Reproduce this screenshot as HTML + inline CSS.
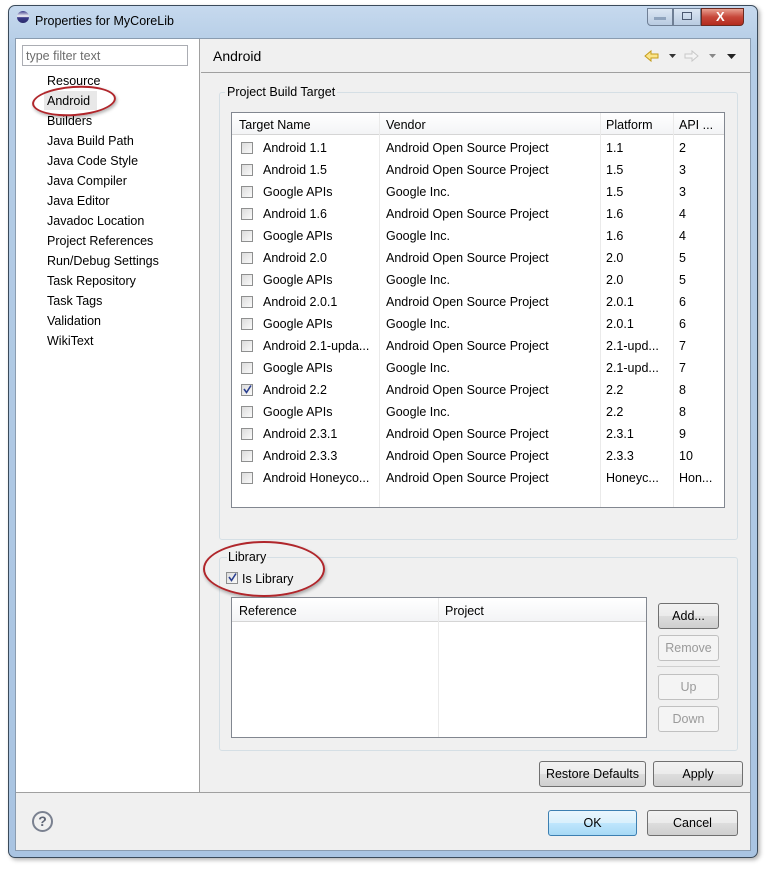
<!DOCTYPE html>
<html><head><meta charset="utf-8"><style>
*{margin:0;padding:0;box-sizing:border-box}
body{width:769px;height:871px;background:#fff;position:relative;overflow:hidden;font-family:"Liberation Sans","Noto Sans CJK SC",sans-serif;font-size:12.5px;color:#000}
.a{position:absolute}
.t{position:absolute;white-space:nowrap;line-height:16px}
.btn{position:absolute;border:1px solid #707070;border-radius:3px;background:linear-gradient(#f2f2f2,#ebebeb 50%,#dddddd 51%,#cfcfcf);text-align:center;font-size:12.5px}
.dis{border-color:#c0c0c0;color:#9a9a9a;background:#f4f4f4}
.cb{position:absolute;width:12px;height:12px;border:1px solid #8e8f8f;background:linear-gradient(135deg,#dcdcdc,#fafafa)}
</style></head><body>
<div class="a" style="left:8px;top:5px;width:750px;height:853px;border:1px solid #3a4a5a;border-radius:7px;background:linear-gradient(#c6d9ee,#b5cde6 40px,#a9c4e2);box-shadow:2px 2px 4px rgba(0,0,0,.3)"></div>
<div class="a" style="left:17px;top:11px;width:12px;height:12px;border-radius:6px;background:linear-gradient(#3a3a8a,#fff 45%,#3a3a8a 55%,#2b2b6b)"></div>
<div class="t" style="left:35px;top:13px;font-size:12.5px">Properties for MyCoreLib</div>
<div class="a" style="left:647px;top:8px;width:26px;height:18px;border:1px solid #6f7f95;border-radius:0 0 0 4px;background:linear-gradient(#dbe6f3,#b9cbe1)"></div>
<div class="a" style="left:654px;top:17px;width:12px;height:3px;background:#8fa3bd"></div>
<div class="a" style="left:673px;top:8px;width:28px;height:18px;border:1px solid #6f7f95;background:linear-gradient(#dbe6f3,#b9cbe1)"></div>
<div class="a" style="left:682px;top:12px;width:10px;height:8px;border:1px solid #4a5870"></div>
<div class="a" style="left:701px;top:8px;width:43px;height:18px;border:1px solid #6b2a20;border-radius:0 0 4px 0;background:linear-gradient(#e8a090,#c7473a 50%,#b32c1e)"></div>
<div class="t" style="left:716px;top:9px;color:#fff;font-weight:bold;font-size:13px">X</div>
<div class="a" style="left:15px;top:38px;width:736px;height:813px;background:#f0f0f0;border:1px solid #8a9cb0"></div>
<div class="a" style="left:16px;top:39px;width:184px;height:753px;background:#fff;border-right:1px solid #a0a0a0"></div>
<div class="a" style="left:22px;top:45px;width:166px;height:21px;border:1px solid #abadb3;background:#fff"></div>
<div class="t" style="left:26px;top:48px;color:#6d6d6d">type filter text</div>
<div class="a" style="left:44px;top:91px;width:53px;height:19px;background:#e8e8e8"></div>
<div class="t" style="left:47px;top:71px;line-height:20px">Resource<br>Android<br>Builders<br>Java Build Path<br>Java Code Style<br>Java Compiler<br>Java Editor<br>Javadoc Location<br>Project References<br>Run/Debug Settings<br>Task Repository<br>Task Tags<br>Validation<br>WikiText</div>
<div class="a" style="left:32px;top:86px;width:84px;height:30px;border:2px solid #b0262b;border-radius:50%;transform:rotate(-4deg);box-shadow:1px 2px 3px rgba(0,0,0,.3)"></div>
<div class="a" style="left:201px;top:72px;width:549px;height:1px;background:#a0a0a0"></div>
<div class="t" style="left:213px;top:48px;font-size:14px">Android</div>
<svg class="a" style="left:640px;top:48px" width="100" height="16"><path d="M5 8 L11 3 V6 H18 V10 H11 V13 Z" fill="#fbe58a" stroke="#c49b1c"/><path d="M29 6 h7 l-3.5 4z" fill="#333"/><path d="M58 8 L52 3 V6 H45 V10 H52 V13 Z" fill="#f4f4f4" stroke="#c8c8c8"/><path d="M69 6 h7 l-3.5 4z" fill="#888"/><path d="M87 6 h9 l-4.5 5z" fill="#222"/></svg>
<div class="a" style="left:219px;top:92px;width:519px;height:448px;border:1px solid #d5dfe5;border-radius:3px"></div>
<div class="t" style="left:225px;top:84px;background:#f0f0f0;padding:0 2px">Project Build Target</div>
<div class="a" style="left:231px;top:112px;width:494px;height:396px;background:#fff;border:1px solid #828790"></div>
<div class="a" style="left:232px;top:113px;width:492px;height:22px;background:linear-gradient(#fff,#f3f4f6);border-bottom:1px solid #d5d5d5"></div>
<div class="a" style="left:379px;top:113px;width:1px;height:394px;background:#eaeaea"></div>
<div class="a" style="left:600px;top:113px;width:1px;height:394px;background:#eaeaea"></div>
<div class="a" style="left:673px;top:113px;width:1px;height:394px;background:#eaeaea"></div>
<div class="t" style="left:239px;top:117px">Target Name</div>
<div class="t" style="left:386px;top:117px">Vendor</div>
<div class="t" style="left:606px;top:117px">Platform</div>
<div class="t" style="left:679px;top:117px">API ...</div>
<div class="t" style="left:263px;top:137px;line-height:22px">Android 1.1<br>Android 1.5<br>Google APIs<br>Android 1.6<br>Google APIs<br>Android 2.0<br>Google APIs<br>Android 2.0.1<br>Google APIs<br>Android 2.1-upda...<br>Google APIs<br>Android 2.2<br>Google APIs<br>Android 2.3.1<br>Android 2.3.3<br>Android Honeyco...</div>
<div class="t" style="left:386px;top:137px;line-height:22px">Android Open Source Project<br>Android Open Source Project<br>Google Inc.<br>Android Open Source Project<br>Google Inc.<br>Android Open Source Project<br>Google Inc.<br>Android Open Source Project<br>Google Inc.<br>Android Open Source Project<br>Google Inc.<br>Android Open Source Project<br>Google Inc.<br>Android Open Source Project<br>Android Open Source Project<br>Android Open Source Project</div>
<div class="t" style="left:606px;top:137px;line-height:22px">1.1<br>1.5<br>1.5<br>1.6<br>1.6<br>2.0<br>2.0<br>2.0.1<br>2.0.1<br>2.1-upd...<br>2.1-upd...<br>2.2<br>2.2<br>2.3.1<br>2.3.3<br>Honeyc...</div>
<div class="t" style="left:679px;top:137px;line-height:22px">2<br>3<br>3<br>4<br>4<br>5<br>5<br>6<br>6<br>7<br>7<br>8<br>8<br>9<br>10<br>Hon...</div>
<div class="cb" style="left:241px;top:142px"></div><div class="cb" style="left:241px;top:164px"></div><div class="cb" style="left:241px;top:186px"></div><div class="cb" style="left:241px;top:208px"></div><div class="cb" style="left:241px;top:230px"></div><div class="cb" style="left:241px;top:252px"></div><div class="cb" style="left:241px;top:274px"></div><div class="cb" style="left:241px;top:296px"></div><div class="cb" style="left:241px;top:318px"></div><div class="cb" style="left:241px;top:340px"></div><div class="cb" style="left:241px;top:362px"></div><div class="cb" style="left:241px;top:384px"></div><div class="cb" style="left:241px;top:406px"></div><div class="cb" style="left:241px;top:428px"></div><div class="cb" style="left:241px;top:450px"></div><div class="cb" style="left:241px;top:472px"></div>
<svg class="a" style="left:242px;top:384px" width="11" height="11"><path d="M2 5 L4.5 8.5 L9 1.5" stroke="#2a3f8f" stroke-width="1.6" fill="none"/></svg>
<div class="a" style="left:219px;top:557px;width:519px;height:194px;border:1px solid #d5dfe5;border-radius:3px"></div>
<div class="t" style="left:227px;top:549px;background:#f0f0f0;padding:0 1px">Library</div>
<div class="cb" style="left:226px;top:572px"></div>
<svg class="a" style="left:227px;top:572px" width="11" height="11"><path d="M2 5 L4.5 8.5 L9 1.5" stroke="#2a3f8f" stroke-width="1.6" fill="none"/></svg>
<div class="t" style="left:242px;top:571px">Is Library</div>
<div class="a" style="left:203px;top:541px;width:122px;height:56px;border:2px solid #b0262b;border-radius:50%;box-shadow:1px 2px 3px rgba(0,0,0,.3)"></div>
<div class="a" style="left:231px;top:597px;width:416px;height:141px;background:#fff;border:1px solid #828790"></div>
<div class="a" style="left:232px;top:598px;width:414px;height:24px;background:linear-gradient(#fff,#f3f4f6);border-bottom:1px solid #d5d5d5"></div>
<div class="a" style="left:438px;top:598px;width:1px;height:139px;background:#eaeaea"></div>
<div class="t" style="left:239px;top:603px">Reference</div>
<div class="t" style="left:445px;top:603px">Project</div>
<div class="btn" style="left:658px;top:603px;width:61px;height:26px;line-height:24px">Add...</div>
<div class="btn dis" style="left:658px;top:635px;width:61px;height:26px;line-height:24px">Remove</div>
<div class="a" style="left:657px;top:666px;width:63px;height:1px;background:#d0d0d0"></div>
<div class="btn dis" style="left:658px;top:674px;width:61px;height:26px;line-height:24px">Up</div>
<div class="btn dis" style="left:658px;top:706px;width:61px;height:26px;line-height:24px">Down</div>
<div class="btn" style="left:539px;top:761px;width:107px;height:26px;line-height:24px">Restore Defaults</div>
<div class="btn" style="left:653px;top:761px;width:90px;height:26px;line-height:24px">Apply</div>
<div class="a" style="left:16px;top:792px;width:734px;height:1px;background:#a0a0a0"></div>
<div class="a" style="left:32px;top:811px;width:21px;height:21px;border:2px solid #7a8190;border-radius:50%;text-align:center;font-weight:bold;color:#5f6676;font-size:14px;line-height:17px">?</div>
<div class="btn" style="left:548px;top:810px;width:89px;height:26px;line-height:24px;border-color:#3c7fb1;background:linear-gradient(#eaf6fd,#d9f0fc 50%,#bee6fd 51%,#a7d9f5)">OK</div>
<div class="btn" style="left:647px;top:810px;width:91px;height:26px;line-height:24px">Cancel</div>
</body></html>
